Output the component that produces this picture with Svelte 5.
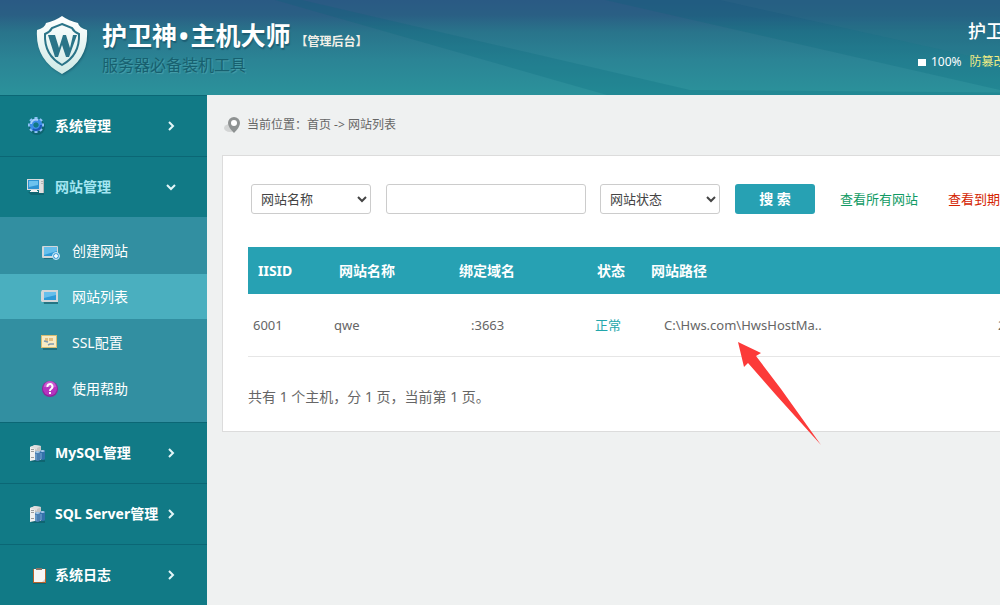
<script lang="ts">
  interface MenuItem {
    label: string;
    icon: string;
    open?: boolean;
    children?: { label: string; icon: string; active?: boolean }[];
  }

  const menu: MenuItem[] = [
    { label: '系统管理', icon: 'gear' },
    {
      label: '网站管理',
      icon: 'computer',
      open: true,
      children: [
        { label: '创建网站', icon: 'screen-add' },
        { label: '网站列表', icon: 'screen', active: true },
        { label: 'SSL配置', icon: 'cert' },
        { label: '使用帮助', icon: 'help' }
      ]
    },
    { label: 'MySQL管理', icon: 'database' },
    { label: 'SQL Server管理', icon: 'database' },
    { label: '系统日志', icon: 'log' }
  ];

  const sites = [
    { id: 6001, name: 'qwe', domain: ':3663', status: '正常', path: 'C:\\Hws.com\\HwsHostMa..', date: '2' }
  ];

  let field = $state('网站名称');
  let keyword = $state('');
  let status = $state('网站状态');
</script>

{#snippet icon(name: string)}
  <svg class="icon" width="20" height="20" viewBox="0 0 20 20" aria-hidden="true">
    {#if name === 'gear'}
      <circle cx="11" cy="11" r="6" fill="none" stroke="#0b4f5c" stroke-width="4" opacity="0.5" />
      <path d="M10 1v16M2 9h16M4.300 3.300l11.400 11.400M15.700 3.300L4.300 14.700" stroke="#8fc3f7" stroke-width="3" />
      <circle cx="10" cy="9" r="3" fill="#117a86" />
      <circle cx="10" cy="9" r="4.500" fill="none" stroke="#3b8ce8" stroke-width="3.500" />
      <path d="M5 8a5 5 0 0 1 7-4" fill="none" stroke="#a5d0fa" stroke-width="2" />
      <path d="M15 9a5 5 0 0 1-8 4" fill="none" stroke="#1c58b8" stroke-width="2" />
    {:else if name === 'computer'}
      <path d="M2 15h16v3H5z" fill="#0b4f5c" opacity="0.5" />
      <path d="M13 2h5v14h-5z" fill="#e0e0e0" />
      <path d="M15 4h2v1h-2zM15 6h2v1h-2zM17 2h1v14h-1z" fill="#b5b5b5" />
      <path d="M1 2h13v11H1z" fill="#d9dcde" />
      <path d="M2 3h11v9H2z" fill="#2e93d2" />
      <path d="M3 4h9v4L3 10z" fill="#6dc2ee" />
      <path d="M5 13h6v1h1v1H4v-1h1z" fill="#f2f2f2" />
    {:else if name === 'screen-add'}
      <path d="M2 7h16v11H4z" fill="#0b4f5c" opacity="0.5" />
      <rect x="2" y="5" width="16" height="12" rx="1" fill="#d3d7d9" />
      <path d="M4 6h13v9H4z" fill="#2e9bd8" />
      <path d="M4 6h13v4L4 14z" fill="#66bfec" />
      <circle cx="16" cy="15" r="3.500" fill="#4ba5da" stroke="#cfeafa" />
      <path d="M14 15h4M16 13v4" stroke="#fff" stroke-width="1.500" />
    {:else if name === 'screen'}
      <path d="M2 6h16v11H4z" fill="#0b4f5c" opacity="0.6" />
      <path d="M2 3h16v12H2l-1-1V5z" fill="#d3d7d9" />
      <path d="M4 5h12v8H4z" fill="#2e9bd8" />
      <path d="M4 5h12v3L4 11z" fill="#66bfec" />
    {:else if name === 'cert'}
      <path d="M2 6h15v11H3z" fill="#0b4f5c" opacity="0.5" />
      <path d="M1 2h16v13H1z" fill="#d8bd72" />
      <path d="M2 3h14v11H2z" fill="#f8ebc4" />
      <path d="M5 5h3v3H5zM9 5h4v3H9z" fill="#e2bd80" />
      <path d="M4 8l4 1M8 12l2-1h4" stroke="#7f9bb0" stroke-width="1.500" fill="none" />
    {:else if name === 'help'}
      <circle cx="10" cy="10" r="8" fill="#8f249b" />
      <circle cx="10" cy="9.500" r="7" fill="#b733c0" />
      <path d="M4 8a6 6 0 0 1 12 0z" fill="#d474da" opacity="0.6" />
      <path d="M7.500 8a2.500 2.500 0 1 1 3.600 1.800Q10 10.300 10 12" fill="none" stroke="#fff" stroke-width="2" />
      <path d="M9 13h2v2H9z" fill="#fff" />
    {:else if name === 'database'}
      <path d="M4 17h15v2H6z" fill="#0b4f5c" opacity="0.5" />
      <path d="M4 4l5-2v15l-5 1z" fill="#f0f0f0" />
      <path d="M9 2l6 1v14H9z" fill="#c4c4c4" />
      <path d="M4 4l5-2 6 1-4 2v2L9 6z" fill="#dedede" />
      <path d="M5 6h3v1H5zM5 8h3v1H5zM5 14h3v1H5z" fill="#9b9b9b" />
      <path d="M9 9q2.500-2 5 0v8q-2.500 2-5 0z" fill="#4b7fb2" />
      <path d="M14 8q2.500-2 5 0v8q-2.500 2-5 0z" fill="#3471ab" />
      <path d="M9 9q2.500-2 5 0-2.500 2-5 0M14 8q2.500-2 5 0-2.500 2-5 0" fill="#a9cdec" />
      <path d="M10 11v6M15 10v6" stroke="#7dabd6" />
    {:else if name === 'log'}
      <path d="M7 6h13v13H7z" fill="#0b4f5c" opacity="0.5" />
      <path d="M7 4h13v14H7z" fill="#b8632b" />
      <path d="M8 4h11v13H8z" fill="#f8f7f5" />
      <path d="M10 3h6v2h-6z" fill="#887569" />
      <path d="M16 17l3-3v3z" fill="#d0cdca" />
    {/if}
  </svg>
{/snippet}

<div class="page">
  <header>
    <svg class="rays" viewBox="0 0 1200 95" preserveAspectRatio="xMinYMin slice" aria-hidden="true">
      <path d="M275 0h27L690 90l510 4v1H607z" />
      <path d="M605 0h595v95h-178z" />
      <path class="ray-light" d="M720 0h480v95h-57L965 55z" />
    </svg>

    <svg class="shield" width="54" height="62" viewBox="0 0 54 62" aria-hidden="true">
      <defs>
        <linearGradient id="shield-fill" x1="0" y1="0" x2="0" y2="1">
          <stop offset="0" stop-color="#fff" />
          <stop offset="1" stop-color="#cfeae6" />
        </linearGradient>
      </defs>
      <path
        d="M27 2Q34 7 43 9Q44 14 52 16Q54 46 27 60Q0 46 2 16Q10 14 11 9Q20 7 27 2z"
        fill="url(#shield-fill)"
      />
      <path
        d="M27 10Q32 12 37 14Q39 18 44 20Q45 41 27 51Q9 41 10 20Q15 18 17 14Q22 12 27 10z"
        fill="none"
        stroke="#2a7488"
        stroke-width="2"
      />
      <path d="M13 21h7l4 13 4-13h3l4 13 3-13h4l-8 22h-3l-4-12-4 12h-3z" fill="#2a7488" />
    </svg>

    <div class="brand">
      <h1><span>护卫神</span><i>•</i><span>主机大师</span></h1>
      <p>服务器必备装机工具</p>
    </div>
    <span class="backend">【管理后台】</span>

    <div class="account">
      <strong>护卫神·主机大师</strong>
      <div class="usage">
        <span class="square"></span>
        <span>100%</span>
        <a href="#protect">防篡改保护</a>
      </div>
    </div>
  </header>

  <div class="body">
    <nav>
      {#each menu as item}
        <a class="item" class:open={item.open} href="#menu">
          {@render icon(item.icon)}
          <span>{item.label}</span>
          <svg class="chevron" width="10" height="10" viewBox="0 0 10 10" aria-hidden="true">
            <path d={item.open ? 'M1 3l4 4 4-4' : 'M3 1l4 4-4 4'} />
          </svg>
        </a>
        {#if item.children}
          <div class="submenu">
            {#each item.children as child}
              <a class:active={child.active} href="#submenu">
                {@render icon(child.icon)}
                <span>{child.label}</span>
              </a>
            {/each}
          </div>
        {/if}
      {/each}
    </nav>

    <main>
      <div class="crumbs">
        <svg width="20" height="20" viewBox="0 0 20 20" aria-hidden="true">
          <ellipse cx="6" cy="13" rx="6" ry="4" fill="#d3d5d5" />
          <path d="M10 2a6 6 0 0 1 6 6q0 4-6 10-6-6-6-10a6 6 0 0 1 6-6z" fill="#8e9292" />
          <circle cx="10" cy="8" r="3" fill="#fff" />
        </svg>
        <span>当前位置：首页 -&gt; 网站列表</span>
      </div>

      <section class="panel">
        <form onsubmit={(e) => e.preventDefault()}>
          <select bind:value={field} aria-label="网站名称">
            <option>网站名称</option>
          </select>
          <input type="text" bind:value={keyword} aria-label="搜索" />
          <select bind:value={status} aria-label="网站状态">
            <option>网站状态</option>
          </select>
          <button type="submit">搜 索</button>
          <a class="all" href="#all">查看所有网站</a>
          <a class="expired" href="#expired">查看到期网站</a>
        </form>

        <table>
          <thead>
            <tr>
              <th class="c-id">IISID</th>
              <th class="c-name">网站名称</th>
              <th class="c-domain">绑定域名</th>
              <th class="c-status">状态</th>
              <th class="c-path">网站路径</th>
              <th></th>
            </tr>
          </thead>
          <tbody>
            {#each sites as site}
              <tr>
                <td>{site.id}</td>
                <td>{site.name}</td>
                <td class="domain">{site.domain}</td>
                <td class="status">{site.status}</td>
                <td class="path">{site.path}</td>
                <td>{site.date}</td>
              </tr>
            {/each}
          </tbody>
        </table>

        <p class="total">共有 1 个主机，分 1 页，当前第 1 页。</p>

        <svg class="arrow" width="84" height="104" viewBox="0 0 84 104" aria-hidden="true">
          <path d="M0 0L23 11 18 14 43 47 83 103 38 53 10 21 6 25z" />
        </svg>
      </section>
    </main>
  </div>
</div>

<style>
  :global(body) {
    margin: 0;
    overflow: hidden;
    background: #eff1f1;
  }

  .page {
    min-width: 1200px;
    font-family: "Noto Sans", "Noto Sans CJK SC", sans-serif;
    font-size: 13px;
    line-height: 20px;
    color: #666;
  }

  a {
    text-decoration: none;
  }

  h1, p {
    margin: 0;
  }

  header {
    position: relative;
    display: flex;
    align-items: flex-start;
    height: 95px;
    overflow: hidden;
    background: linear-gradient(#2a5a84 0, #2a5f84 15px, #29748b 32px, #2b8495 60px, #2b929b 95px);
    color: #fff;
  }

  .rays {
    position: absolute;
    inset: 0;
    width: 100%;
    height: 100%;
    fill: #006678;
    fill-opacity: 0.2;
  }

  .rays .ray-light {
    fill: #4d7f95;
    fill-opacity: 0.12;
  }

  .shield {
    position: relative;
    margin: 14px 13px 0 35px;
    filter: drop-shadow(1px 1px 1px #1c6274);
  }

  .brand {
    position: relative;
    padding-top: 19px;
  }

  .brand h1 {
    display: flex;
    gap: 2px;
    font-size: 25px;
    line-height: 32px;
    font-weight: bold;
    text-shadow: 1px 2px 1px #1d5f74;
  }

  .brand i {
    font-style: normal;
  }

  .brand p {
    padding-top: 4px;
    font-size: 16px;
    line-height: 20px;
    color: #17606f;
    text-shadow: 1px 1px 1px #4aa0ab;
  }

  .backend {
    position: relative;
    margin: 32px 0 0 5px;
    font-size: 12px;
    font-weight: bold;
    color: #f2f0e8;
  }

  .brand p, .backend {
    white-space: nowrap;
  }

  .account {
    position: relative;
    width: 282px;
    margin-left: auto;
    padding-top: 19px;
  }

  .account strong {
    display: block;
    padding-left: 50px;
    font-size: 18px;
    line-height: 24px;
    font-weight: 500;
  }

  .usage {
    display: flex;
    align-items: center;
    padding-top: 9px;
    font-size: 12px;
  }

  .square {
    width: 8px;
    height: 7px;
    margin-right: 5px;
    background: #fff;
  }

  .usage a {
    margin-left: 8px;
    color: #f3ee84;
  }

  .body {
    display: flex;
    align-items: flex-start;
  }

  nav {
    flex: none;
    width: 207px;
    background: #117a86;
  }

  nav a {
    display: flex;
    align-items: center;
    color: #fff;
    font-size: 14px;
  }

  .item {
    box-sizing: border-box;
    height: 61px;
    padding: 0 31px 0 26px;
    border-top: 1px solid #0b6775;
    font-weight: bold;
    white-space: nowrap;
  }

  .item .icon {
    flex: none;
    margin-right: 9px;
  }

  .item.open {
    color: #a4e6f2;
  }

  .chevron {
    flex: none;
    margin-left: auto;
    fill: none;
    stroke: #e3f6f8;
    stroke-width: 2;
  }

  .submenu {
    display: flex;
    flex-direction: column;
    gap: 1px;
    padding: 11px 0;
    background: #328fa1;
  }

  .submenu a {
    height: 45px;
    padding-left: 40px;
  }

  .submenu a.active {
    background: #4aafbf;
  }

  .submenu .icon {
    margin-right: 12px;
  }

  main {
    flex: 1;
    padding-left: 15px;
  }

  .crumbs {
    display: flex;
    align-items: center;
    gap: 3px;
    height: 60px;
    padding-left: 2px;
    font-size: 12px;
  }

  .panel {
    position: relative;
    padding: 28px 25px 24px;
    border: 1px solid #dcdcdc;
    background: #fff;
  }

  form {
    display: flex;
    align-items: center;
    padding: 0 0 33px 3px;
  }

  select, input {
    box-sizing: border-box;
    height: 30px;
    margin-right: 15px;
    border: 1px solid #ccc;
    border-radius: 3px;
    background: #fff;
    font: inherit;
    color: #444;
  }

  select {
    width: 120px;
    padding: 0 5px;
  }

  input {
    width: 200px;
    margin-right: 14px;
    padding: 0 8px;
  }

  button {
    width: 80px;
    height: 30px;
    margin-right: 25px;
    padding: 0;
    border: 0;
    border-radius: 3px;
    background: #27a1b3;
    color: #fff;
    font: inherit;
    font-size: 14px;
    font-weight: bold;
    cursor: pointer;
  }

  .all {
    margin-right: 30px;
    color: #109a63;
  }

  .expired {
    color: #d42300;
  }

  table {
    width: 100%;
    table-layout: fixed;
    border-collapse: collapse;
    text-align: left;
  }

  th {
    height: 47px;
    padding: 0 10px;
    background: #27a1b3;
    color: #fff;
    font-size: 14px;
  }

  td {
    height: 62px;
    padding: 0 5px;
    border-bottom: 1px solid #e6e6e6;
  }

  .c-id {
    width: 61px;
  }

  .c-name {
    width: 100px;
  }

  .c-domain {
    width: 118px;
  }

  .c-status {
    width: 34px;
  }

  .c-path {
    width: 332px;
  }

  .domain {
    padding-left: 22px;
  }

  .status {
    padding-left: 8px;
    color: #22a6ab;
  }

  .path {
    padding-left: 23px;
  }

  .total {
    padding-top: 30px;
    font-size: 14px;
  }

  .arrow {
    position: absolute;
    top: 186px;
    left: 515px;
    fill: #fc3a39;
  }
</style>
